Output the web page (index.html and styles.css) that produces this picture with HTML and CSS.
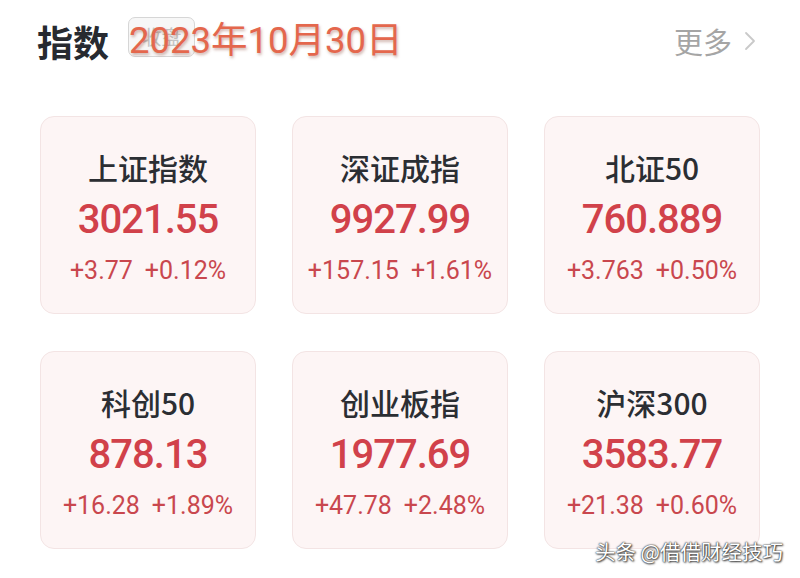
FILE: index.html
```html
<!DOCTYPE html>
<html lang="zh-CN">
<head>
<meta charset="utf-8">
<title>指数</title>
<link rel="stylesheet" href="styles.css">
</head>
<body>
<div class="page">
  <header class="head">
    <div class="head-left">
      <h1 class="title">指数</h1>
      <div class="date-wrap">
        <span class="tag">收盘</span>
        <span class="date">2023年10月30日</span>
      </div>
    </div>
    <div class="more">更多<svg class="chev" width="12" height="20" viewBox="0 0 12 20"><path d="M2 2 L10 10 L2 18" fill="none" stroke="#c9c9c9" stroke-width="1.8" stroke-linecap="round" stroke-linejoin="round"/></svg></div>
  </header>
  <main class="grid">
    <div class="card"><div class="name">上证指数</div><div class="val">3021.55</div><div class="chg"><span>+3.77</span><span>+0.12%</span></div></div>
    <div class="card"><div class="name">深证成指</div><div class="val">9927.99</div><div class="chg"><span>+157.15</span><span>+1.61%</span></div></div>
    <div class="card"><div class="name">北证50</div><div class="val">760.889</div><div class="chg"><span>+3.763</span><span>+0.50%</span></div></div>
    <div class="card"><div class="name">科创50</div><div class="val">878.13</div><div class="chg"><span>+16.28</span><span>+1.89%</span></div></div>
    <div class="card"><div class="name">创业板指</div><div class="val">1977.69</div><div class="chg"><span>+47.78</span><span>+2.48%</span></div></div>
    <div class="card"><div class="name">沪深300</div><div class="val">3583.77</div><div class="chg"><span>+21.38</span><span>+0.60%</span></div></div>
  </main>
  <div class="watermark">头条 @借借财经技巧</div>
</div>
</body>
</html>
```
FILE: styles.css
```css
* { box-sizing: border-box; }
html, body { margin: 0; padding: 0; background: #ffffff; }
body {
  font-family: Roboto, "Noto Sans CJK SC", sans-serif;
  width: 800px;
  height: 578px;
  overflow: hidden;
}
.page { position: relative; width: 800px; height: 578px; }
.head {
  display: flex;
  justify-content: space-between;
  align-items: center;
  height: 82px;
  padding: 0 44px 0 37px;
}
.head-left { display: flex; align-items: center; }
.title {
  margin: 0;
  font-family: "Noto Sans CJK SC", sans-serif;
  font-size: 36px;
  font-weight: 700;
  color: #272a30;
  line-height: 40px;
}
.date-wrap {
  position: relative;
  margin-left: 20px;
  height: 40px;
  display: flex;
  align-items: center;
}
.tag {
  position: absolute;
  left: -1px;
  top: -4px;
  width: 67px;
  height: 40px;
  border: 1px solid #d6d6d6;
  border-radius: 7px;
  background: #f7f7f7;
  color: #c4c4c4;
  font-family: "Noto Sans CJK SC", sans-serif;
  font-size: 20px;
  line-height: 38px;
  text-align: center;
}
.date {
  position: relative;
  font-family: Roboto, "Noto Sans CJK SC", sans-serif;
  font-size: 36.5px;
  font-weight: 400;
  color: #e4674d;
  line-height: 40px;
  text-shadow: 1px 2px 3px rgba(120, 40, 20, 0.35);
}
.more {
  display: flex;
  align-items: center;
  gap: 12px;
  font-family: "Noto Sans CJK SC", sans-serif;
  font-size: 29px;
  color: #a5a5a5;
  line-height: 36px;
  margin-left: -4px;
}
.chev { display: block; }
.grid {
  display: grid;
  grid-template-columns: repeat(3, 216px);
  grid-auto-rows: 198px;
  column-gap: 36px;
  row-gap: 37px;
  padding: 34px 40px 0 40px;
}
.card {
  background: #fdf5f5;
  border: 1px solid #f3e4e4;
  border-radius: 14px;
  display: flex;
  flex-direction: column;
  align-items: center;
  padding-top: 32px;
}
.name {
  font-family: "Noto Sans CJK SC", sans-serif;
  font-size: 30px;
  font-weight: 500;
  color: #2b2e33;
  line-height: 36px;
}
.val {
  margin-top: 11px;
  font-family: Roboto, sans-serif;
  font-size: 40px;
  font-weight: 500;
  letter-spacing: -1px;
  color: #d1414a;
  line-height: 48px;
}
.chg {
  margin-top: 12px;
  display: flex;
  gap: 12px;
  font-family: Roboto, sans-serif;
  font-size: 25px;
  color: #c9474e;
  line-height: 30px;
}
.watermark {
  position: absolute;
  right: 17px;
  top: 536px;
  font-family: "Noto Sans CJK SC", sans-serif;
  font-size: 20.5px;
  color: #ffffff;
  line-height: 30px;
  text-shadow: 0 0 1px #333, 0 0 2px #333, 1px 1px 2px #444;
}
```
